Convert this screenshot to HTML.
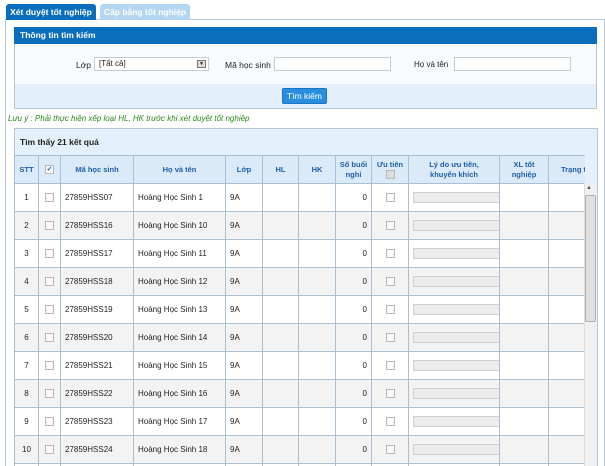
<!DOCTYPE html>
<html style="overflow:hidden;height:466px"><head><meta charset="utf-8"><style>
*{box-sizing:border-box;margin:0;padding:0}
body{width:605px;height:466px;overflow:hidden;background:#fff;font-family:"Liberation Sans",Tahoma,sans-serif;font-size:8px;color:#222;position:relative}
.abs{position:absolute}
.tab1{left:6px;top:4px;width:90px;height:16px;background:#0a6ebd;color:#fff;font-weight:bold;font-size:8.5px;line-height:16px;text-align:center;border-radius:3px 3px 0 0}
.tab2{left:100px;top:4px;width:90px;height:16px;background:#b3d6f2;color:#fff;font-weight:bold;font-size:8.5px;line-height:16px;text-align:center;border-radius:3px 3px 0 0}
.panel{left:5px;top:19px;width:600px;height:447px;border:1px solid #b6c8d6;border-bottom:none}
.sb{left:14px;top:27px;width:583px;height:82px;border:1px solid #b6c8d6;background:#f7fbfe}
.sbh{left:14px;top:27px;width:583px;height:17px;background:#0a6ebd;color:#fff;font-weight:bold;font-size:8.5px;line-height:17px;padding-left:6px}
.sbf{left:15px;top:84px;width:581px;height:24px;background:#e3effa}
.inp{height:14px;border:1px solid #c4cdd4;background:#fff}
.btn{left:282px;top:88px;width:45px;height:16px;background:#2a8ee0;border:1px solid #1a74c0;color:#fff;font-size:8.5px;line-height:14px;text-align:center;border-radius:2px}
.note{left:8px;top:114px;color:#2a8a1a;font-style:italic;font-size:8px}
.rb{left:14px;top:128px;width:584px;height:338px;border:1px solid #b6c8d6;border-bottom:none;background:#e4f0fb}
.rbh{left:20px;top:137px;font-weight:bold;font-size:8.5px}
.wrap{position:absolute;left:14px;top:155px;width:571px;height:311px;overflow:hidden}
table{border-collapse:collapse;table-layout:fixed;width:572px}
td,th{border:1px solid #a9c0d3;height:28px;font-size:8px;padding:0 4px;white-space:nowrap;overflow:hidden}
th{background:#dbeaf8;color:#1f5fa8;font-weight:bold;text-align:center;line-height:10px;padding:0;font-size:7.5px}
tr:nth-child(odd) td{background:#f3f3f3}
tr:nth-child(even) td{background:#fff}
.c{text-align:center}.r{text-align:right}
.cb{display:inline-block;width:9px;height:9px;border:1px solid #b8b8b8;background:#fafafa;vertical-align:middle}
.bar{display:block;height:11px;background:#ececec;border:1px solid #cfcfcf;margin-right:-5px}
</style></head><body>
<div class="abs panel"></div>
<div class="abs tab1">Xét duyệt tốt nghiệp</div>
<div class="abs tab2">Cấp bằng tốt nghiệp</div>
<div class="abs sb"></div>
<div class="abs sbh">Thông tin tìm kiếm</div>
<div class="abs sbf"></div>
<div class="abs" style="left:76px;top:60px;font-size:8.5px">Lớp</div>
<div class="abs inp" style="left:94px;top:57px;width:115px;padding-left:4px;line-height:12px">[Tất cả]<span style="position:absolute;right:2px;top:2px;width:9px;height:8px;border:1px solid #777;background:#ddd;font-size:5px;line-height:6px;text-align:center">▼</span></div>
<div class="abs" style="left:225px;top:60px;font-size:8.5px">Mã học sinh</div>
<div class="abs inp" style="left:274px;top:57px;width:117px"></div>
<div class="abs" style="left:414px;top:60px;font-size:8px">Họ và tên</div>
<div class="abs inp" style="left:454px;top:57px;width:117px"></div>
<div class="abs btn">Tìm kiếm</div>
<div class="abs note">Lưu ý : Phải thực hiện xếp loại HL, HK trước khi xét duyệt tốt nghiệp</div>
<div class="abs rb"></div>
<div class="abs rbh">Tìm thấy 21 kết quả</div>
<div class="wrap">
<table>
<colgroup><col style="width:24px"><col style="width:22px"><col style="width:73px"><col style="width:92px"><col style="width:37px"><col style="width:36px"><col style="width:37px"><col style="width:36px"><col style="width:37px"><col style="width:91px"><col style="width:49px"><col style="width:38px"></colgroup>
<tr><th>STT</th><th><span class="cb" style="font-size:7px;line-height:7px;color:#1f5fa8">✓</span></th><th>Mã học sinh</th><th>Họ và tên</th><th>Lớp</th><th>HL</th><th>HK</th><th>Số buổi<br>nghỉ</th><th>Ưu tiên<br><span class="cb" style="background:#ddd"></span></th><th>Lý do ưu tiên,<br>khuyến khích</th><th>XL tốt<br>nghiệp</th><th style="text-align:left;padding-left:12px">Trạng thái</th></tr>
<tr><td class="c">1</td><td class="c"><span class="cb"></span></td><td>27859HSS07</td><td>Hoàng Học Sinh 1</td><td>9A</td><td></td><td></td><td class="r">0</td><td class="c"><span class="cb"></span></td><td><span class="bar"></span></td><td></td><td></td></tr>
<tr><td class="c">2</td><td class="c"><span class="cb"></span></td><td>27859HSS16</td><td>Hoàng Học Sinh 10</td><td>9A</td><td></td><td></td><td class="r">0</td><td class="c"><span class="cb"></span></td><td><span class="bar"></span></td><td></td><td></td></tr>
<tr><td class="c">3</td><td class="c"><span class="cb"></span></td><td>27859HSS17</td><td>Hoàng Học Sinh 11</td><td>9A</td><td></td><td></td><td class="r">0</td><td class="c"><span class="cb"></span></td><td><span class="bar"></span></td><td></td><td></td></tr>
<tr><td class="c">4</td><td class="c"><span class="cb"></span></td><td>27859HSS18</td><td>Hoàng Học Sinh 12</td><td>9A</td><td></td><td></td><td class="r">0</td><td class="c"><span class="cb"></span></td><td><span class="bar"></span></td><td></td><td></td></tr>
<tr><td class="c">5</td><td class="c"><span class="cb"></span></td><td>27859HSS19</td><td>Hoàng Học Sinh 13</td><td>9A</td><td></td><td></td><td class="r">0</td><td class="c"><span class="cb"></span></td><td><span class="bar"></span></td><td></td><td></td></tr>
<tr><td class="c">6</td><td class="c"><span class="cb"></span></td><td>27859HSS20</td><td>Hoàng Học Sinh 14</td><td>9A</td><td></td><td></td><td class="r">0</td><td class="c"><span class="cb"></span></td><td><span class="bar"></span></td><td></td><td></td></tr>
<tr><td class="c">7</td><td class="c"><span class="cb"></span></td><td>27859HSS21</td><td>Hoàng Học Sinh 15</td><td>9A</td><td></td><td></td><td class="r">0</td><td class="c"><span class="cb"></span></td><td><span class="bar"></span></td><td></td><td></td></tr>
<tr><td class="c">8</td><td class="c"><span class="cb"></span></td><td>27859HSS22</td><td>Hoàng Học Sinh 16</td><td>9A</td><td></td><td></td><td class="r">0</td><td class="c"><span class="cb"></span></td><td><span class="bar"></span></td><td></td><td></td></tr>
<tr><td class="c">9</td><td class="c"><span class="cb"></span></td><td>27859HSS23</td><td>Hoàng Học Sinh 17</td><td>9A</td><td></td><td></td><td class="r">0</td><td class="c"><span class="cb"></span></td><td><span class="bar"></span></td><td></td><td></td></tr>
<tr><td class="c">10</td><td class="c"><span class="cb"></span></td><td>27859HSS24</td><td>Hoàng Học Sinh 18</td><td>9A</td><td></td><td></td><td class="r">0</td><td class="c"><span class="cb"></span></td><td><span class="bar"></span></td><td></td><td></td></tr>
<tr><td class="c">11</td><td class="c"><span class="cb"></span></td><td>27859HSS25</td><td>Hoàng Học Sinh 19</td><td>9A</td><td></td><td></td><td class="r">0</td><td class="c"><span class="cb"></span></td><td><span class="bar"></span></td><td></td><td></td></tr>
</table>
</div>
<div class="abs" style="left:584px;top:183px;width:13px;height:283px;background:#f0f0f0;border-left:1px solid #ddd"></div>
<div class="abs" style="left:586px;top:185px;font-size:6px;color:#555">▲</div>
<div class="abs" style="left:585px;top:195px;width:11px;height:127px;background:#e0e0e0;border:1px solid #b0b0b0;border-radius:2px"></div>
</body></html>
